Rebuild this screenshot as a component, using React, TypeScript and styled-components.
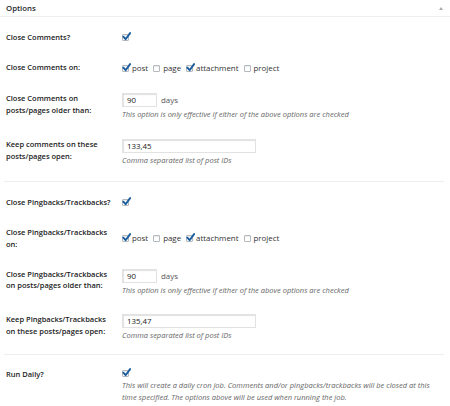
import React from "react";
import styled, { createGlobalStyle } from "styled-components";

const Global = createGlobalStyle`
  html, body { margin: 0; padding: 0; background: #fff; }
  body { font-family: "Open Sans", "Liberation Sans", sans-serif; color: #222; }
`;

const Panel = styled.div`
  width: 450px;
  height: 406px;
  overflow: hidden;
  background: #fff;
`;

const Header = styled.div`
  display: flex;
  align-items: center;
  justify-content: space-between;
  height: 16px;
  padding: 0 7px 0 6px;
  border-bottom: 1px solid #eee;
`;

const Title = styled.span`
  font-size: 7.8px;
  font-weight: 600;
  color: #23282d;
`;

const Arrow = styled.span`
  width: 0;
  height: 0;
  border-left: 2.5px solid transparent;
  border-right: 2.5px solid transparent;
  border-bottom: 3px solid #aaa;
`;

const Section = styled.div<{ $top: number; $bottom: number; $last?: boolean }>`
  margin: 0 6px 0 4px;
  padding: ${(p) => p.$top}px 0 ${(p) => p.$bottom}px;
  border-bottom: ${(p) => (p.$last ? "none" : "1px solid #eee")};
`;

const Row = styled.div<{ $pad?: number }>`
  display: grid;
  grid-template-columns: 118px 1fr;
  padding: ${(p) => p.$pad ?? 9}px 0;
`;

const Label = styled.div`
  padding-left: 2px;
  font-size: 7.5px;
  line-height: 11.8px;
  font-weight: 600;
  color: #222;
`;

const Field = styled.div`
  display: flex;
  flex-direction: column;
  gap: 2px;
`;

const Inline = styled.div`
  display: flex;
  align-items: center;
  height: 11.5px;
  font-size: 7.9px;
  color: #333;
`;

const InputRow = styled.div`
  display: flex;
  align-items: center;
  gap: 4px;
  font-size: 7.9px;
  color: #555;
`;

const TextBox = styled.div<{ $w: number }>`
  width: ${(p) => p.$w}px;
  height: 14px;
  box-sizing: border-box;
  border: 1px solid #e2e2e2;
  box-shadow: inset 1px 1px 1px rgba(0, 0, 0, 0.12);
  padding-left: 4px;
  display: flex;
  align-items: center;
  font-size: 7.9px;
  color: #222;
  background: #fff;
`;

const Desc = styled.div`
  font-size: 7.5px;
  line-height: 11.8px;
  font-style: italic;
  color: #666;
`;

const Box = styled.span`
  position: relative;
  display: inline-block;
  width: 7px;
  height: 7px;
  box-sizing: border-box;
  border: 1px solid #b4b9be;
  border-radius: 1px;
  background: #fff;
  box-shadow: inset 0 1px 1px rgba(0, 0, 0, 0.08);
  flex: none;
`;

const Check = styled.svg`
  position: absolute;
  left: -1px;
  top: -3px;
  width: 9px;
  height: 9px;
`;

const Opt = styled.span`
  display: inline-flex;
  align-items: center;
  gap: 3px;
  margin-right: 5px;
`;

const Checkbox = ({ checked }: { checked?: boolean }) => (
  <Box>
    {checked && (
      <Check viewBox="0 0 10 10">
        <path d="M1.5 5.2 L4 8 L9 1.2" fill="none" stroke="#1a5c9e" strokeWidth="2.1" strokeLinecap="round" strokeLinejoin="round" />
      </Check>
    )}
  </Box>
);

const types: [string, boolean][] = [
  ["post", true],
  ["page", false],
  ["attachment", true],
  ["project", false],
];

const TypeList = () => (
  <Inline>
    {types.map(([name, c]) => (
      <Opt key={name}>
        <Checkbox checked={c} />
        {name}
      </Opt>
    ))}
  </Inline>
);

const EFFECTIVE = "This option is only effective if either of the above options are checked";

export default function App() {
  return (
    <Panel>
      <Global />
      <Header>
        <Title>Options</Title>
        <Arrow />
      </Header>
      <Section $top={5.5} $bottom={5}>
        <Row>
          <Label>Close Comments?</Label>
          <Inline>
            <Checkbox checked />
          </Inline>
        </Row>
        <Row $pad={10}>
          <Label>Close Comments on:</Label>
          <TypeList />
        </Row>
        <Row>
          <Label>
            Close Comments on
            <br />
            posts/pages older than:
          </Label>
          <Field>
            <InputRow>
              <TextBox $w={35}>90</TextBox>
              days
            </InputRow>
            <Desc>{EFFECTIVE}</Desc>
          </Field>
        </Row>
        <Row>
          <Label>
            Keep comments on these
            <br />
            posts/pages open:
          </Label>
          <Field>
            <TextBox $w={134}>133,45</TextBox>
            <Desc>Comma separated list of post IDs</Desc>
          </Field>
        </Row>
      </Section>
      <Section $top={6.5} $bottom={3}>
        <Row>
          <Label>Close Pingbacks/Trackbacks?</Label>
          <Inline>
            <Checkbox checked />
          </Inline>
        </Row>
        <Row>
          <Label>
            Close Pingbacks/Trackbacks
            <br />
            on:
          </Label>
          <Field>
            <Inline style={{ height: 23 }}>
              <TypeList />
            </Inline>
          </Field>
        </Row>
        <Row>
          <Label>
            Close Pingbacks/Trackbacks
            <br />
            on posts/pages older than:
          </Label>
          <Field>
            <InputRow>
              <TextBox $w={35}>90</TextBox>
              days
            </InputRow>
            <Desc>{EFFECTIVE}</Desc>
          </Field>
        </Row>
        <Row>
          <Label>
            Keep Pingbacks/Trackbacks
            <br />
            on these posts/pages open:
          </Label>
          <Field>
            <TextBox $w={134}>135,47</TextBox>
            <Desc>Comma separated list of post IDs</Desc>
          </Field>
        </Row>
      </Section>
      <Section $top={5} $bottom={0} $last>
        <Row>
          <Label>Run Daily?</Label>
          <Field>
            <Inline style={{ height: 9 }}>
              <Checkbox checked />
            </Inline>
            <Desc>
              This will create a daily cron job. Comments and/or pingbacks/trackbacks will be closed at this
              <br />
              time specified. The options above will be used when running the job.
            </Desc>
          </Field>
        </Row>
      </Section>
    </Panel>
  );
}
